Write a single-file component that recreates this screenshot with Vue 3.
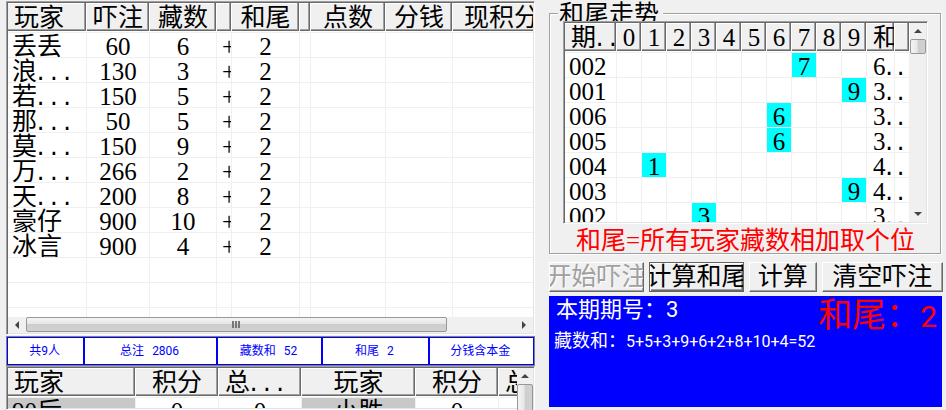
<script setup>
import { ref } from 'vue'

const betColumns = [
  { label: '玩家', width: 79 },
  { label: '吓注', width: 63 },
  { label: '藏数', width: 67 },
  { label: '', width: 15 },
  { label: '和尾', width: 68 },
  { label: '', width: 11 },
  { label: '点数', width: 75 },
  { label: '分钱', width: 67 },
  { label: '现积分', width: 98 },
]

const bets = ref([
  { name: '丢丢', bet: 60, hidden: 6 },
  { name: '浪', cut: true, bet: 130, hidden: 3 },
  { name: '若', cut: true, bet: 150, hidden: 5 },
  { name: '那', cut: true, bet: 50, hidden: 5 },
  { name: '莫', cut: true, bet: 150, hidden: 9 },
  { name: '万', cut: true, bet: 266, hidden: 2 },
  { name: '天', cut: true, bet: 200, hidden: 8 },
  { name: '豪仔', bet: 900, hidden: 10 },
  { name: '冰言', bet: 900, hidden: 4 },
])
const tail = ref(2)
const emptyRows = 3

const summary = [
  { label: '共9人', width: 76 },
  { label: '总注', value: 2806, width: 133 },
  { label: '藏数和', value: 52, width: 105 },
  { label: '和尾', value: 2, width: 106 },
  { label: '分钱含本金', width: 105 },
]

const scoreColumns = [
  { label: '玩家', width: 128 },
  { label: '积分', width: 83 },
  { label: '总', cut: true, width: 83 },
  { label: '玩家', width: 114 },
  { label: '积分', width: 83 },
  { label: '总', cut: true, width: 83 },
]
const scores = [['90后', 0, 0, '小胜', 0, 0]]

const digits = [0, 1, 2, 3, 4, 5, 6, 7, 8, 9]
const trend = [
  { issue: '002', tail: 7, sum: 6 },
  { issue: '001', tail: 9, sum: 3 },
  { issue: '006', tail: 6, sum: 3 },
  { issue: '005', tail: 6, sum: 3 },
  { issue: '004', tail: 1, sum: 4 },
  { issue: '003', tail: 9, sum: 4 },
  { issue: '002', tail: 3, sum: 3 },
]

const actions = [
  { label: '开始吓注', grow: 95, disabled: true },
  { label: '计算和尾', grow: 95, active: true },
  { label: '计算', grow: 67 },
  { label: '清空吓注', grow: 122 },
]
</script>

<template>
  <main class="page">
    <section class="left">
      <div class="list bets">
        <div class="view">
          <table>
            <colgroup>
              <col v-for="(c, i) in betColumns" :key="i" :style="{ width: c.width + 'px' }" />
            </colgroup>
            <thead>
              <tr><th v-for="(c, i) in betColumns" :key="i">{{ c.label }}</th></tr>
            </thead>
            <tbody>
              <tr v-for="b in bets" :key="b.name">
                <td>{{ b.name }}<span v-if="b.cut" class="dots">...</span></td>
                <td>{{ b.bet }}</td>
                <td>{{ b.hidden }}</td>
                <td class="plus">+</td>
                <td>{{ tail }}</td>
                <td></td><td></td><td></td><td></td>
              </tr>
              <tr v-for="n in emptyRows" :key="'e' + n">
                <td v-for="(c, i) in betColumns" :key="i"></td>
              </tr>
            </tbody>
          </table>
        </div>
        <div class="hbar">
          <button type="button" aria-label="向左滚动">
            <svg width="4" height="8" viewBox="0 0 4 8"><path d="M4 0V8L0 4Z" fill="#444" /></svg>
          </button>
          <div class="htrack">
            <div class="hthumb">
              <svg width="8" height="7" viewBox="0 0 8 7"><path d="M0 0h2v7H0zM3 0h2v7H3zM6 0h2v7H6z" fill="#777" /></svg>
            </div>
          </div>
          <button type="button" aria-label="向右滚动">
            <svg width="4" height="8" viewBox="0 0 4 8"><path d="M0 0V8L4 4Z" fill="#444" /></svg>
          </button>
        </div>
      </div>

      <div class="summary">
        <div v-for="s in summary" :key="s.label" class="summary-cell" :style="{ flexGrow: s.width }">
          <span>{{ s.label }}</span>
          <span v-if="s.value !== undefined">{{ s.value }}</span>
        </div>
      </div>

      <div class="list scores">
        <div class="view">
          <table>
            <colgroup>
              <col v-for="(c, i) in scoreColumns" :key="i" :style="{ width: c.width + 'px' }" />
            </colgroup>
            <thead>
              <tr>
                <th v-for="(c, i) in scoreColumns" :key="i" :class="{ start: c.cut }">
                  {{ c.label }}<span v-if="c.cut" class="dots">...</span>
                </th>
              </tr>
            </thead>
            <tbody>
              <tr v-for="(row, r) in scores" :key="r">
                <td v-for="(v, i) in row" :key="i" :class="{ player: i % 3 === 0 }">{{ v }}</td>
              </tr>
            </tbody>
          </table>
        </div>
        <div class="vbar">
          <button type="button" aria-label="向上滚动">
            <svg width="8" height="4" viewBox="0 0 8 4"><path d="M0 4H8L4 0Z" fill="#444" /></svg>
          </button>
          <div class="vtrack"><div class="vthumb tall"></div></div>
        </div>
      </div>
    </section>

    <section class="right">
      <fieldset>
        <legend>和尾走势</legend>
        <div class="list trend">
          <div class="view">
            <table>
              <colgroup>
                <col class="col-issue" />
                <col v-for="d in digits" :key="d" class="col-digit" />
                <col class="col-sum" />
                <col />
              </colgroup>
              <thead>
                <tr>
                  <th>期<span class="dots">..</span></th>
                  <th v-for="d in digits" :key="d">{{ d }}</th>
                  <th class="start">和</th>
                  <th></th>
                </tr>
              </thead>
              <tbody>
                <tr v-for="(t, i) in trend" :key="i">
                  <td>{{ t.issue }}</td>
                  <td v-for="d in digits" :key="d" :class="{ hit: d === t.tail }">{{ d === t.tail ? d : '' }}</td>
                  <td class="sum">{{ t.sum }}<span class="dots">.</span></td>
                  <td><span class="dots">.</span></td>
                </tr>
              </tbody>
            </table>
          </div>
          <div class="vbar">
            <button type="button" aria-label="向上滚动">
              <svg width="8" height="4" viewBox="0 0 8 4"><path d="M0 4H8L4 0Z" fill="#444" /></svg>
            </button>
            <div class="vtrack"><div class="vthumb"></div></div>
            <button type="button" aria-label="向下滚动">
              <svg width="8" height="4" viewBox="0 0 8 4"><path d="M0 0H8L4 4Z" fill="#444" /></svg>
            </button>
          </div>
        </div>
        <p class="rule">和尾=所有玩家藏数相加取个位</p>
      </fieldset>

      <div class="actions">
        <button
          v-for="a in actions"
          :key="a.label"
          type="button"
          class="action"
          :class="{ active: a.active }"
          :disabled="a.disabled"
          :style="{ flexGrow: a.grow }"
        >{{ a.label }}</button>
      </div>

      <div class="board">
        <div>
          <p class="issue">本期期号：3</p>
          <p class="formula">藏数和：<span>5+5+3+9+6+2+8+10+4=52</span></p>
        </div>
        <p class="result">和尾：<span>2</span></p>
      </div>
    </section>
  </main>
</template>

<style>
body {
  background: #f0f0f0;
  overflow: hidden;
}
</style>

<style scoped>
* {
  box-sizing: border-box;
}

.page {
  display: grid;
  grid-template-columns: minmax(0, 529fr) minmax(0, 394fr);
  gap: 14px;
  height: 100vh;
  padding: 1px 3px 0 6px;
  overflow: hidden;
  color: #000;
  font-family: "Liberation Serif", "Noto Sans CJK SC", serif;
  font-size: 25px;
  font-weight: 400;
}

.left {
  display: flex;
  flex-direction: column;
  min-height: 0;
}

.list {
  display: flex;
  background: #fff;
  border: 1px solid;
  border-color: #a0a0a0 #fff #fff #a0a0a0;
  box-shadow: inset 1px 1px #696969, inset -1px -1px #e3e3e3;
  padding: 1px;
}

.view {
  flex: 1;
  min-width: 0;
  min-height: 0;
  overflow: hidden;
}

.bets {
  flex: none;
  flex-direction: column;
  height: 334px;
}

.scores {
  flex: 1;
  min-height: 0;
}

table {
  width: 100%;
  table-layout: fixed;
  border-collapse: separate;
  border-spacing: 0;
}

th,
td {
  padding: 0;
  overflow: hidden;
  white-space: nowrap;
  text-align: center;
  font-weight: inherit;
}

th {
  height: 29px;
  padding-top: 2px;
  line-height: 26px;
  background: #f0f0f0;
  border-right: 1px solid #fff;
  border-bottom: 1px solid #fff;
  box-shadow: inset -1px -1px #696969, inset -2px -2px #a0a0a0, inset 0 1px #fff;
}

td {
  height: 25px;
  padding-top: 4px;
  line-height: 20px;
  border-right: 1px solid #f0f0f0;
  border-bottom: 1px solid #f0f0f0;
}

tbody tr:first-child td {
  height: 26px;
  border-top: 1px solid #f0f0f0;
}

th:first-child {
  text-align: left;
  padding-left: 6px;
}

td:first-child {
  text-align: left;
  padding-left: 4px;
}

th.start {
  text-align: left;
  padding-left: 6px;
}

td.plus {
  text-align: left;
  padding-left: 5px;
}

td.sum {
  text-align: left;
  padding-left: 6px;
}

td.player {
  background: #c8c8c8;
}

td.hit {
  background: #0ff;
}

.dots {
  margin-left: -3px;
  font-family: "Liberation Mono", monospace;
  font-size: 22px;
  line-height: 0;
}

.col-issue {
  width: 52px;
}

.col-digit {
  width: 25px;
}

.col-sum {
  width: 28px;
}

.hbar,
.vbar {
  display: flex;
  flex: none;
  background: #f0f0f0;
}

.hbar {
  height: 16px;
}

.vbar {
  flex-direction: column;
  width: 16px;
}

.hbar button,
.vbar button {
  display: flex;
  flex: none;
  align-items: center;
  justify-content: center;
  width: 16px;
  height: 16px;
  padding: 0;
  border: 0;
  background: none;
}

.hbar button {
  width: 18px;
}

.htrack,
.vtrack {
  flex: 1;
  min-width: 0;
  min-height: 0;
}

.hthumb {
  display: flex;
  align-items: center;
  justify-content: center;
  width: 86%;
  height: 15px;
  border: 1px solid #979797;
  border-radius: 2px;
  background: linear-gradient(#f4f4f4, #e6e6e6 45%, #cdcdd0 50%, #d2d2d4);
}

.vthumb {
  height: 15px;
  border: 1px solid #979797;
  border-radius: 2px;
  background: linear-gradient(to right, #f4f4f4, #e6e6e6 45%, #cdcdd0 50%, #d2d2d4);
}

.vthumb.tall {
  height: 100px;
}

.summary {
  display: flex;
  flex: none;
  height: 30px;
  margin-top: 1px;
  border: 1px solid #808080;
  background: #fff;
  color: #00f;
  font-family: Roboto, "Noto Sans CJK SC", sans-serif;
  font-size: 12px;
}

.summary-cell {
  display: flex;
  flex: 1 1 0;
  align-items: center;
  justify-content: center;
  gap: 8px;
  padding-right: 2px;
  border: 1px solid #00f;
  line-height: 18px;
  white-space: nowrap;
}

.right {
  min-width: 0;
  padding-top: 5px;
}

fieldset {
  min-width: 0;
  margin: 0 2px 0 0;
  padding: 0 12px 0 13px;
  border: 1px solid #a0a0a0;
  box-shadow: 1px 1px #fff, inset 1px 1px #fff;
}

legend {
  height: 15px;
  margin-left: -5px;
  padding: 0 4px 0 1px;
  background: #f0f0f0;
  line-height: 18px;
}

.trend {
  position: relative;
  height: 203px;
}

.rule {
  margin: 0;
  padding-top: 5px;
  color: #f00;
  line-height: 24px;
  text-align: center;
  white-space: nowrap;
}

.actions {
  display: flex;
  gap: 5px;
  margin-top: 8px;
}

.action {
  display: flex;
  flex: 1 1 0;
  align-items: center;
  justify-content: center;
  min-width: 0;
  height: 30px;
  padding: 0;
  overflow: hidden;
  border: 1px solid;
  border-color: #fff #696969 #696969 #fff;
  background: #f0f0f0;
  box-shadow: inset -1px -1px #a0a0a0;
  color: #000;
  font: inherit;
  line-height: 26px;
  white-space: nowrap;
}

.action.active {
  border-color: #646464;
  box-shadow: inset 1px 1px #fff, inset -1px -1px #696969, inset -2px -2px #a0a0a0;
}

.action:disabled {
  color: #a0a0a0;
  text-shadow: 1px 1px #fff;
}

.board {
  display: flex;
  justify-content: space-between;
  height: 111px;
  margin: 4px 1px 0 0;
  padding: 0 5px;
  background: #00f;
  color: #fff;
  font-family: Roboto, "Noto Sans CJK SC", sans-serif;
  white-space: nowrap;
}

.board p {
  margin: 0;
}

.board .issue {
  padding-left: 2px;
  font-size: 22px;
  line-height: 28px;
}

.board .formula {
  margin-top: 3px;
  font-size: 18px;
  line-height: 28px;
}

.board .formula span {
  font-size: 16px;
}

.board .result {
  color: #f00;
  font-size: 34px;
  line-height: 38px;
}

.board .result span {
  font-size: 30px;
}
</style>
